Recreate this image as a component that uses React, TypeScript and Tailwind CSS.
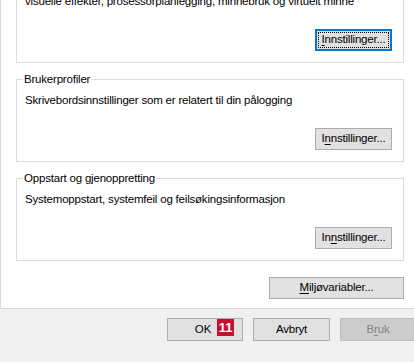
import React from 'react';

const font = { fontFamily: '"Liberation Sans", Arial, sans-serif' };

// letter with the mnemonic underline
const Mn: React.FC<{ text: string; at: number }> = ({ text, at }) => (
  <>
    {text.slice(0, at)}
    <span className="underline underline-offset-[2px]">{text[at]}</span>
    {text.slice(at + 1)}
  </>
);

const WinButton: React.FC<{
  children: React.ReactNode;
  focused?: boolean;
  disabled?: boolean;
  className?: string;
}> = ({ children, focused, disabled, className = '' }) => {
  if (focused) {
    return (
      <button className={`relative h-[22px] border-2 border-[#0078d7] bg-[#e1e1e1] text-[11.5px] tracking-[-0.2px] leading-none text-black ${className}`}>
        <span className="absolute inset-[1px] border border-dotted border-black" />
        {children}
      </button>
    );
  }
  if (disabled) {
    return (
      <button className={`h-[23px] border border-[#bfbfbf] bg-[#cccccc] text-[11.5px] tracking-[-0.2px] leading-none text-[#838383] ${className}`}>
        {children}
      </button>
    );
  }
  return (
    <button className={`h-[22px] border border-[#adadad] bg-[#e1e1e1] text-[11.5px] tracking-[-0.2px] leading-none text-black ${className}`}>
      {children}
    </button>
  );
};

const Group: React.FC<{
  label?: string;
  text: string;
  children: React.ReactNode;
  className?: string;
}> = ({ label, text, children, className = '' }) => (
  <div className={`relative border border-[#dcdcdc] pl-[8px] pr-[11px] pt-[12px] pb-[11px] ${className}`}>
    {label && (
      <span className="absolute -top-[9px] left-[6px] bg-white px-[1px] text-[11.5px] tracking-[-0.2px] leading-[16px] text-black">
        {label}
      </span>
    )}
    <div className="text-[11.5px] tracking-[-0.2px] leading-[16px] text-black whitespace-nowrap">{text}</div>
    <div className="mt-[20px] flex justify-end">{children}</div>
  </div>
);

export default function App() {
  return (
    <div className="h-[362px] w-[414px] overflow-hidden bg-[#f0f0f0]" style={font}>
      {/* tab page */}
      <div className="h-[329px] w-[420px] border-b border-l border-[#d9d9d9] bg-white pl-[15px] pr-[16px]">
        <Group
          className="-mt-[20px]"
          label="Ytelse"
          text="visuelle effekter, prosessorplanlegging, minnebruk og virtuelt minne"
        >
          <WinButton focused className="w-[77px]">
            <Mn text="Innstillinger..." at={0} />
          </WinButton>
        </Group>

        <Group
          className="mt-[16px]"
          label="Brukerprofiler"
          text="Skrivebordsinnstillinger som er relatert til din pålogging"
        >
          <WinButton className="w-[77px]">
            <Mn text="Innstillinger..." at={1} />
          </WinButton>
        </Group>

        <Group
          className="mt-[16px]"
          label="Oppstart og gjenoppretting"
          text="Systemoppstart, systemfeil og feilsøkingsinformasjon"
        >
          <WinButton className="w-[77px]">
            <Mn text="Innstillinger..." at={2} />
          </WinButton>
        </Group>

        <div className="mt-[16px] flex justify-end">
          <WinButton className="w-[135px]">
            <Mn text="Miljøvariabler..." at={0} />
          </WinButton>
        </div>
      </div>

      {/* dialog buttons */}
      <div className="mt-[9px] flex gap-[10px] pl-[167px]">
        <button className="relative h-[23px] w-[76px] shrink-0 border border-[#adadad] bg-[#e1e1e1] text-[11.5px] leading-none text-black">
          <span className="relative -left-[2px]">OK</span>
          <span className="absolute left-[49px] top-[0px] flex h-[17px] w-[17px] items-center justify-center bg-[#c8102e] text-[13px] font-bold leading-none text-white">
            11
          </span>
        </button>
        <WinButton className="w-[77px] shrink-0 !h-[23px]">Avbryt</WinButton>
        <WinButton disabled className="w-[76px] shrink-0">
          <Mn text="Bruk" at={1} />
        </WinButton>
      </div>
    </div>
  );
}
